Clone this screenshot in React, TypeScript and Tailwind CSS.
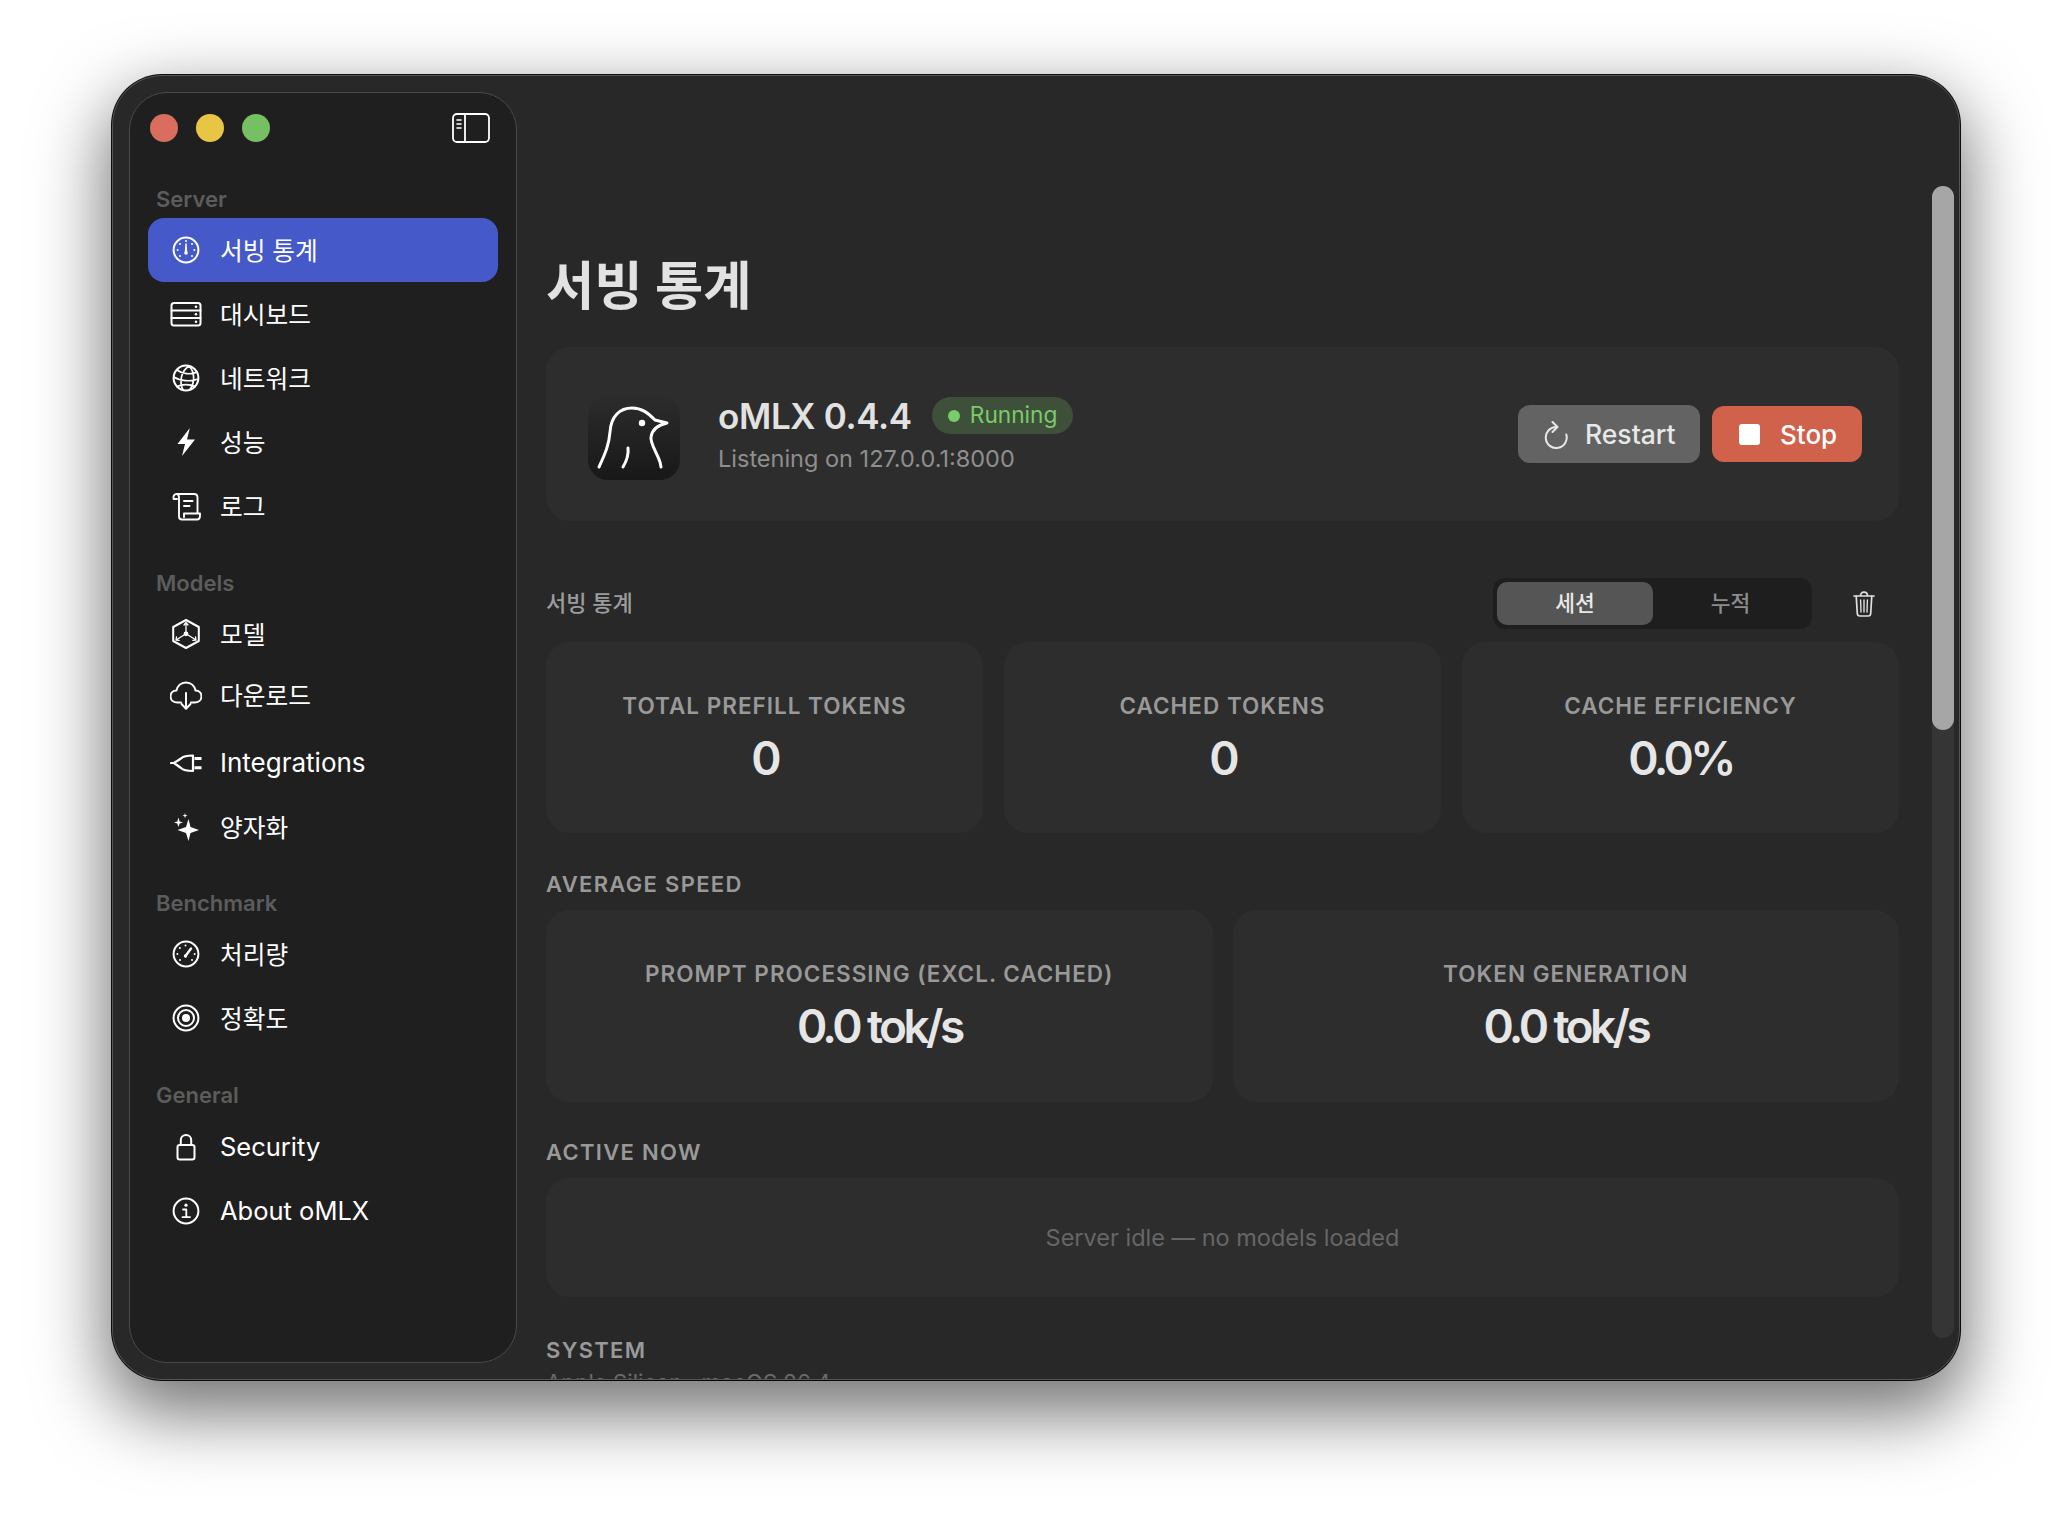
import React from "react";

const s = { fill: "none", stroke: "currentColor", strokeWidth: 2, strokeLinecap: "round" as const, strokeLinejoin: "round" as const };

function Ico({ children }: { children: React.ReactNode }) {
  return (
    <svg viewBox="0 0 32 32" className="w-8 h-8 shrink-0 text-white" {...s}>
      {children}
    </svg>
  );
}

const GaugeI = () => (
  <Ico>
    <circle cx="16" cy="16" r="12.4" />
    <path d="M15.2 18 L16 9.5 L16.8 18 Z" fill="currentColor" strokeWidth="1" />
    <g fill="currentColor" stroke="none">
      <circle cx="16" cy="7" r="1" />
      <circle cx="10" cy="10" r="1" />
      <circle cx="22" cy="10" r="1" />
      <circle cx="7.6" cy="16" r="1" />
      <circle cx="24.4" cy="16" r="1" />
      <circle cx="10" cy="22" r="1" />
      <circle cx="22" cy="22" r="1" />
      <circle cx="16" cy="19" r="1.8" />
    </g>
  </Ico>
);
const ServerI = () => (
  <Ico>
    <rect x="1.5" y="5" width="29" height="22.5" rx="2.5" />
    <path d="M1.5 12.5 H30.5 M1.5 20 H30.5" />
    <g fill="currentColor" stroke="none">
      <circle cx="26" cy="8.8" r="1.3" />
      <circle cx="26" cy="16.2" r="1.3" />
      <circle cx="26" cy="23.7" r="1.3" />
    </g>
  </Ico>
);
const GlobeI = () => (
  <Ico>
    <circle cx="16" cy="16" r="12.4" />
    <path d="M19 4 C11 9 9 20 13 28 M19 4 C25 10 25 20 20 27.5 M7 8 C12 12 21 13 27 10 M3.8 15 C10 19 21 20 28.2 17 M7 24.5 C12 22 20 22 25 24.5" strokeWidth="1.7" />
  </Ico>
);
const BoltI = () => (
  <Ico>
    <path d="M19.8 2 L7.5 18 H15 L12 30 L25 13.5 H17 Z" fill="currentColor" stroke="none" />
  </Ico>
);
const ScrollI = () => (
  <Ico>
    <path d="M7 9 H3.6 C3 5.5 4.5 4 6.5 4 H24 C26 4 27.5 5.5 27.5 7.5 V23.5 M6.5 4 C8.5 4 9 6 9 8 V26.5 C9 28.5 10.5 29.5 12 29.5 H27 C29 29.5 30 28 30 25.5 V23.5 H14 V27" strokeWidth="1.9" />
    <path d="M14 11 H22.5 M14 16 H19.5" />
  </Ico>
);
const CubeI = () => (
  <Ico>
    <path d="M16 2 L28.8 9 V23 L16 30 L3.2 23 V9 Z" />
    <path d="M16 14 V4.5 M14 7 L16 4.5 L18 7 M14 17 L6 22 M6.5 19 L6 22 L9.2 22.3 M18 17 L26 22 M25.5 19 L26 22 L22.8 22.3" strokeWidth="1.3" />
    <circle cx="16" cy="15.8" r="2.4" fill="currentColor" stroke="none" />
  </Ico>
);
const CloudI = () => (
  <Ico>
    <path d="M11 23.5 H7.5 C3.5 23.5 0.5 21 0.5 17.5 C0.5 14 3 11.5 6.5 11.5 C7.5 7 11 3.5 16 3.5 C21 3.5 24.5 7 25.5 11.5 C29 11.5 31.5 14 31.5 17.5 C31.5 21 28.5 23.5 24.5 23.5 H21" />
    <path d="M16 14 V29.5 M11.5 25 L16 29.8 L20.5 25" />
  </Ico>
);
const PlugI = () => (
  <Ico>
    <path d="M1 16 H4 L11 11.5 C13.5 9 16 8.5 23 8.5 V24 C16 24 13.5 23.5 11 21 L4 16" strokeWidth="2.2" />
    <path d="M24.5 11.5 H31.5 M24.5 20.8 H31.5" strokeWidth="3" strokeLinecap="butt" />
  </Ico>
);
const SparkI = () => (
  <Ico>
    <g fill="currentColor" stroke="none">
      <path d="M18.5 8 L20.5 16 L29 19 L20.5 22 L18.5 30 L16 22 L7.5 19 L16 16 Z" />
      <path d="M8.5 6.5 L9.6 10.4 L13 11.5 L9.6 12.6 L8.5 16 L7.3 12.6 L4 11.5 L7.3 10.4 Z" />
      <path d="M15 2 L15.6 4 L17.6 4.6 L15.6 5.2 L15 7.2 L14.4 5.2 L12.4 4.6 L14.4 4 Z" />
    </g>
  </Ico>
);
const SpeedI = () => (
  <Ico>
    <circle cx="16" cy="16" r="12.4" />
    <path d="M15.5 18 L21 10.5" strokeWidth="2.4" />
    <g fill="currentColor" stroke="none">
      <circle cx="15.5" cy="7.5" r="1" />
      <circle cx="9.8" cy="10" r="1" />
      <circle cx="7.4" cy="16" r="1" />
      <circle cx="24.6" cy="16" r="1" />
      <circle cx="10" cy="22" r="1" />
      <circle cx="22" cy="22" r="1" />
      <circle cx="15.5" cy="18" r="1.7" />
    </g>
  </Ico>
);
const TargetI = () => (
  <Ico>
    <circle cx="16" cy="16" r="12.4" />
    <circle cx="16" cy="16" r="8" />
    <circle cx="16" cy="16" r="4" fill="currentColor" stroke="none" />
  </Ico>
);
const LockI = () => (
  <Ico>
    <rect x="7.5" y="14" width="17" height="14.5" rx="2.2" />
    <path d="M10.8 14 V9 C10.8 6 13 4 16 4 C19 4 21.2 6 21.2 9 V14" />
  </Ico>
);
const InfoI = () => (
  <Ico>
    <circle cx="16" cy="16" r="12.4" />
    <circle cx="16" cy="10.2" r="1.6" fill="currentColor" stroke="none" />
    <path d="M13 14.5 H16.3 V22 M12.5 22.2 H20" strokeWidth="1.8" />
  </Ico>
);

type Item = { label: string; Icon: () => React.JSX.Element; cls?: string; active?: boolean; size?: string };

const Row = ({ label, Icon, cls = "", active, size }: Item) => (
  <div className={`flex items-center h-16 w-[350px] rounded-2xl pl-[22px] gap-[18px] leading-8 text-white ${size ?? "text-[24.7px]"} ${active ? "bg-[#4559c9]" : ""} ${cls}`}>
    <Icon />
    <span className={size ? "" : "pt-[1px]"}>{label}</span>
  </div>
);

const Head = ({ label, cls }: { label: string; cls: string }) => (
  <div className={`h-7 pl-2 text-[22px] leading-7 font-semibold text-[#5c5c5c] ${cls}`}>{label}</div>
);

const Sidebar = () => (
  <aside className="w-[388px] my-[17px] ml-[17px] shrink-0 rounded-[38px] border border-[#4a4a4a] bg-[#1f1f1f] px-[18px]">
    <div className="flex items-center justify-between h-[92px] px-[2px] pb-[23px]">
      <div className="flex gap-[18px]">
        <span className="w-7 h-7 rounded-full bg-[#d96d5e]" />
        <span className="w-7 h-7 rounded-full bg-[#e8c544]" />
        <span className="w-7 h-7 rounded-full bg-[#76bf62]" />
      </div>
      <svg viewBox="0 0 38 30" className="w-[38px] h-[30px] text-white mr-[6px]" {...s} strokeWidth="1.8">
        <rect x="1" y="1" width="36" height="28" rx="4" />
        <path d="M13 1 V29" />
        <path d="M5 7 H9 M5 11 H9 M5 15 H9" strokeWidth="1.6" />
      </svg>
    </div>
    <Head label="Server" cls="mt-0" />
    <div className="mt-[5px]">
      <Row label="서빙 통계" Icon={GaugeI} active />
      <Row label="대시보드" Icon={ServerI} />
      <Row label="네트워크" Icon={GlobeI} />
      <Row label="성능" Icon={BoltI} />
      <Row label="로그" Icon={ScrollI} />
    </div>
    <Head label="Models" cls="mt-[31px]" />
    <div className="mt-[5px]">
      <Row label="모델" Icon={CubeI} />
      <Row label="다운로드" Icon={CloudI} cls="-mt-[3px]" />
      <Row label="Integrations" Icon={PlugI} cls="mt-[4px]" size="text-[26px]" />
      <Row label="양자화" Icon={SparkI} />
    </div>
    <Head label="Benchmark" cls="mt-[30px]" />
    <div className="mt-[5px]">
      <Row label="처리량" Icon={SpeedI} />
      <Row label="정확도" Icon={TargetI} />
    </div>
    <Head label="General" cls="mt-[31px]" />
    <div className="mt-[6px]">
      <Row label="Security" Icon={LockI} size="text-[25.5px]" />
      <Row label="About oMLX" Icon={InfoI} size="text-[25.5px]" />
    </div>
  </aside>
);

const Stat = ({ label, value, h }: { label: string; value: string; h: string }) => (
  <div className={`flex flex-col items-center rounded-3xl bg-[#2d2d2d] ${h}`}>
    <div className="mt-[50px] text-[22.5px] leading-7 font-semibold tracking-[1px] text-[#999999] whitespace-nowrap">{label}</div>
    <div className="mt-[10px] text-[46px] leading-[56px] font-semibold tracking-[-3.6px] text-[#e6e6e6]">{value}</div>
  </div>
);

const Label = ({ children, cls }: { children: React.ReactNode; cls: string }) => (
  <div className={`h-7 text-[22px] leading-7 font-semibold tracking-[0.06em] text-[#999999] ${cls}`}>{children}</div>
);

const Main = () => (
  <main className="flex-1 min-w-0 pl-[29px] pr-[61px] pt-[181px]">
    <h1 className="h-[60px] text-[52.5px] leading-[60px] font-bold text-[#e2e2e2]">서빙 통계</h1>

    <section className="mt-[31px] h-[174px] rounded-3xl bg-[#2d2d2d] flex items-center pl-[42px] pr-[37px]">
      <svg viewBox="0 0 92 84" className="w-[92px] h-[84px] mt-[8px] shrink-0">
        <defs>
          <linearGradient id="lg" x1="0" y1="0" x2="0" y2="1">
            <stop offset="0" stopColor="#2c2c2c" />
            <stop offset="1" stopColor="#181818" />
          </linearGradient>
        </defs>
        <rect x="0" y="0" width="92" height="84" rx="20" fill="url(#lg)" />
        <path d="M11 71 C18 56 21 48 22 36 C23 20 32 12 44 12 C54 12 60 17 67 24 L79 27 C70 29 64 34 63 41 C62 47 68 55 72 66 L73 71" fill="none" stroke="#fff" strokeWidth="3" strokeLinecap="round" strokeLinejoin="round" />
        <path d="M40 52 C41 60 38 66 35 71" fill="none" stroke="#fff" strokeWidth="3" strokeLinecap="round" />
        <circle cx="54" cy="27" r="3.2" fill="#fff" />
      </svg>
      <div className="ml-[38px]">
        <div className="flex items-center gap-[20px]">
          <span className="text-[35px] leading-[44px] font-semibold text-[#e2e2e2] tracking-[-0.01em]">oMLX 0.4.4</span>
          <span className="flex items-center gap-[10px] h-[37px] px-4 rounded-full bg-[#3e4f3a] text-[22.7px] text-[#7acb6b]">
            <span className="w-3 h-3 rounded-full bg-[#7acb6b]" />
            Running
          </span>
        </div>
        <div className="text-[23.5px] leading-8 mt-[5px] text-[#8f8f8f]">Listening on 127.0.0.1:8000</div>
      </div>
      <div className="ml-auto flex items-center gap-3">
        <button className="flex items-center h-[58px] w-[182px] pl-[26px] gap-[17px] pt-[1px] rounded-xl bg-[#636363] text-[26.5px] font-medium text-[#e8e8e8]">
          <svg viewBox="0 0 24 28" className="w-6 h-7 shrink-0" {...s}>
            <path d="M12.5 6 A10.5 10.5 0 1 0 22.3 13.5" />
            <path d="M8.5 1 L13.5 6 L8.5 11" />
          </svg>
          Restart
        </button>
        <button className="flex items-center h-[56px] w-[150px] pl-[27px] gap-[20px] rounded-xl bg-[#d0614b] text-[26px] font-medium text-white">
          <span className="w-[21px] h-[21px] rounded-[3px] bg-white shrink-0" />
          Stop
        </button>
      </div>
    </section>

    <div className="mt-[57px] h-[51px] flex items-center">
      <span className="text-[22px] text-[#9c9c9c] font-medium">서빙 통계</span>
      <div className="ml-auto flex w-[319px] h-[51px] p-[4px] rounded-xl bg-[#1e1e1e] text-[21.5px]">
        <span className="w-[156px] rounded-[10px] bg-[#555555] flex items-center justify-center text-[#e8e8e8] font-medium">세션</span>
        <span className="flex-1 flex items-center justify-center text-[#8c8c8c] font-medium">누적</span>
      </div>
      <svg viewBox="0 0 22 26" className="w-[22px] h-[26px] ml-[41px] mr-[24px] text-[#e0e0e0]" {...s} strokeWidth="1.7">
        <path d="M1 5 H21 M7.5 5 C7.5 2.5 9 1.2 11 1.2 C13 1.2 14.5 2.5 14.5 5" />
        <path d="M3.2 5 L4.3 22.5 C4.4 24 5.4 25 6.8 25 H15.2 C16.6 25 17.6 24 17.7 22.5 L18.8 5" />
        <path d="M7.6 9 L8 21 M11 9 V21 M14.4 9 L14 21" strokeWidth="1.4" />
      </svg>
    </div>

    <div className="mt-[13px] grid grid-cols-3 gap-[21px]">
      <Stat label="TOTAL PREFILL TOKENS" value="0" h="h-[191px]" />
      <Stat label="CACHED TOKENS" value="0" h="h-[191px]" />
      <Stat label="CACHE EFFICIENCY" value="0.0%" h="h-[191px]" />
    </div>

    <Label cls="mt-[37px]">AVERAGE SPEED</Label>
    <div className="mt-3 grid grid-cols-2 gap-5">
      <Stat label="PROMPT PROCESSING (EXCL. CACHED)" value="0.0 tok/s" h="h-[192px]" />
      <Stat label="TOKEN GENERATION" value="0.0 tok/s" h="h-[192px]" />
    </div>

    <Label cls="mt-9">ACTIVE NOW</Label>
    <div className="mt-3 h-[119px] rounded-3xl bg-[#2d2d2d] flex items-center justify-center text-[23.5px] text-[#666666]">
      Server idle — no models loaded
    </div>

    <Label cls="mt-[39px]">SYSTEM</Label>
    <div className="mt-[3px] text-[22.2px] leading-8 text-[#6a6a6a]">Apple Silicon · macOS 26.4</div>
  </main>
);

export default function App() {
  return (
    <div className="min-h-[1528px] w-[2072px] bg-white pt-[75px] pl-[112px] overflow-hidden font-[Inter,'Noto_Sans_CJK_KR',sans-serif]">
      <div className="relative flex w-[1848px] h-[1305px] overflow-hidden rounded-[50px] bg-[#282828] shadow-[0_28px_70px_6px_rgba(0,0,0,0.55),0_0_0_1px_#111111]">
        <Sidebar />
        <Main />
        <div className="absolute right-[6px] top-[111px] w-[22px] h-[1152px] rounded-full bg-[#353535]">
          <div className="w-[22px] h-[544px] rounded-full bg-[#a6a6a6]" />
        </div>
        <div className="absolute inset-0 rounded-[50px] pointer-events-none shadow-[inset_0_0_0_1px_#555555]" />
      </div>
    </div>
  );
}
